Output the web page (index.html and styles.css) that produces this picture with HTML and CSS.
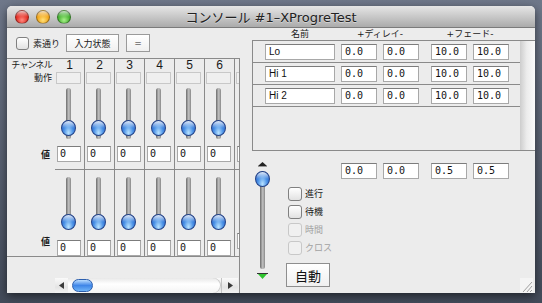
FILE: index.html
```html
<!DOCTYPE html>
<html lang="ja">
<head>
  <meta charset="UTF-8">
  <title>コンソール #1–XProgreTest</title>
  <link rel="stylesheet" href="styles.css">
</head>
<body>
  <div class="window">
    <div class="titlebar">
      <div class="lights">
        <span class="light red"></span>
        <span class="light yellow"></span>
        <span class="light green"></span>
      </div>
      <div class="title">コンソール #1–XProgreTest</div>
      <div class="spacer"></div>
    </div>

    <div class="content">
      <div class="left">
        <div class="toolbar">
          <span class="box"></span>
          <span class="toolbar-label">素通り</span>
          <button class="btn wide">入力状態</button>
          <button class="btn">=</button>
        </div>

        <div class="lower-left">
          <div class="mixer">
            <div class="labels">
              <div class="lbl-ch">チャンネル</div>
              <div class="lbl-act">動作</div>
              <div class="lbl-gap"></div>
              <div class="lbl-val">値</div>
              <div class="lbl-gap2"></div>
              <div class="lbl-val low">値</div>
            </div>

            <div class="strip">
              <div class="ch">1</div>
              <div class="act"></div>
              <div class="fader"><div class="rail"></div><div class="knob"></div></div>
              <div class="tf val">0</div>
              <div class="half">
                <div class="fader low"><div class="rail"></div><div class="knob"></div></div>
                <div class="tf val low">0</div>
              </div>
            </div>
            <div class="strip">
              <div class="ch">2</div>
              <div class="act"></div>
              <div class="fader"><div class="rail"></div><div class="knob"></div></div>
              <div class="tf val">0</div>
              <div class="half">
                <div class="fader low"><div class="rail"></div><div class="knob"></div></div>
                <div class="tf val low">0</div>
              </div>
            </div>
            <div class="strip">
              <div class="ch">3</div>
              <div class="act"></div>
              <div class="fader"><div class="rail"></div><div class="knob"></div></div>
              <div class="tf val">0</div>
              <div class="half">
                <div class="fader low"><div class="rail"></div><div class="knob"></div></div>
                <div class="tf val low">0</div>
              </div>
            </div>
            <div class="strip">
              <div class="ch">4</div>
              <div class="act"></div>
              <div class="fader"><div class="rail"></div><div class="knob"></div></div>
              <div class="tf val">0</div>
              <div class="half">
                <div class="fader low"><div class="rail"></div><div class="knob"></div></div>
                <div class="tf val low">0</div>
              </div>
            </div>
            <div class="strip">
              <div class="ch">5</div>
              <div class="act"></div>
              <div class="fader"><div class="rail"></div><div class="knob"></div></div>
              <div class="tf val">0</div>
              <div class="half">
                <div class="fader low"><div class="rail"></div><div class="knob"></div></div>
                <div class="tf val low">0</div>
              </div>
            </div>
            <div class="strip">
              <div class="ch">6</div>
              <div class="act"></div>
              <div class="fader"><div class="rail"></div><div class="knob"></div></div>
              <div class="tf val">0</div>
              <div class="half">
                <div class="fader low"><div class="rail"></div><div class="knob"></div></div>
                <div class="tf val low">0</div>
              </div>
            </div>
            <!-- next channel, scrolled out of view -->
            <div class="strip">
              <div class="ch"></div>
              <div class="act"></div>
              <div class="fader"></div>
              <div class="tf val"></div>
              <div class="half">
                <div class="fader low"></div>
                <div class="tf val low"></div>
              </div>
            </div>
          </div>

          <div class="hbar-wrap">
            <div class="hbar">
              <span class="hbar-btn">
                <svg width="5" height="7" viewBox="0 0 5 7"><polygon points="5,0 5,7 0,3.5" fill="#3a3a3a"/></svg>
              </span>
              <span class="hbar-track"><span class="hbar-thumb"></span></span>
              <span class="hbar-btn end">
                <svg width="5" height="7" viewBox="0 0 5 7"><polygon points="0,0 0,7 5,3.5" fill="#3a3a3a"/></svg>
              </span>
            </div>
          </div>
        </div>
      </div>

      <div class="right">
        <div class="heads">
          <span class="h-name">名前</span>
          <span class="h-pair">+ディレイ-</span>
          <span class="h-pair fade">+フェード-</span>
        </div>

        <div class="table">
          <div class="rows">
            <div class="row">
              <div class="tf name">Lo</div>
              <div class="tf num">0.0</div>
              <div class="tf num">0.0</div>
              <div class="tf num fade">10.0</div>
              <div class="tf num">10.0</div>
            </div>
            <div class="row">
              <div class="tf name">Hi 1</div>
              <div class="tf num">0.0</div>
              <div class="tf num">0.0</div>
              <div class="tf num fade">10.0</div>
              <div class="tf num">10.0</div>
            </div>
            <div class="row">
              <div class="tf name">Hi 2</div>
              <div class="tf num">0.0</div>
              <div class="tf num">0.0</div>
              <div class="tf num fade">10.0</div>
              <div class="tf num">10.0</div>
            </div>
          </div>
          <div class="vscroll"></div>
        </div>

        <div class="lower">
          <div class="vslider">
            <svg width="9" height="5" viewBox="0 0 9 5"><polygon points="0,4 9,4 4.5,0" fill="#222"/><rect x="0" y="4" width="9" height="1" fill="#999"/></svg>
            <div class="vtrack"><div class="knob"></div></div>
            <svg class="down" width="11" height="6" viewBox="0 0 11 6"><rect x="0" y="0" width="11" height="1" fill="#333"/><polygon points="1,1 10,1 5.5,6" fill="#2ec42e"/></svg>
          </div>

          <div class="controls">
            <div class="vals">
              <div class="tf num">0.0</div>
              <div class="tf num">0.0</div>
              <div class="tf num fade">0.5</div>
              <div class="tf num">0.5</div>
            </div>
            <div class="checks">
              <div class="chk"><span class="box"></span><span>進行</span></div>
              <div class="chk"><span class="box"></span><span>待機</span></div>
              <div class="chk off"><span class="box"></span><span>時間</span></div>
              <div class="chk off"><span class="box"></span><span>クロス</span></div>
            </div>
            <button class="auto">自動</button>
          </div>
        </div>
      </div>
    </div>

    <svg class="grip" width="13" height="15" viewBox="0 0 13 15">
      <rect width="13" height="15" fill="#f4f4f4"/>
      <line x1="12" y1="4" x2="3" y2="14" stroke="#a0a0a0"/>
      <line x1="12" y1="8" x2="7" y2="14" stroke="#a0a0a0"/>
      <line x1="12" y1="12" x2="10" y2="14" stroke="#a0a0a0"/>
    </svg>
  </div>
</body>
</html>
```

FILE: styles.css
```css
body {
  margin: 0;
  height: 303px;
  padding: 6px 0 0 7px;
  box-sizing: border-box;
  background: linear-gradient(#6f788a, #434b5a);
  font-family: "DejaVu Sans", "Noto Sans CJK JP", sans-serif;
  color: #1a1a1a;
  overflow: hidden;
}
.window {
  position: relative;
  width: 528px;
  height: 287px;
  background: #ececec;
  border-radius: 5px 5px 0 0;
  box-shadow: 0 3px 10px rgba(0,0,0,0.55);
  display: flex;
  flex-direction: column;
}

/* title bar */
.titlebar {
  height: 21px;
  border-bottom: 1px solid #7b7b7b;
  border-radius: 5px 5px 0 0;
  background: linear-gradient(#e6e6e6, #ababab);
  display: flex;
  align-items: center;
}
.lights {
  width: 64px;
  padding-left: 8px;
  box-sizing: border-box;
  display: flex;
  gap: 7px;
}
.spacer {
  width: 64px;
}
.light {
  width: 14px;
  height: 14px;
  border-radius: 50%;
  box-sizing: border-box;
  border: 1px solid rgba(0,0,0,0.35);
}
.light.red {
  background: linear-gradient(rgba(255,255,255,0.75), rgba(255,255,255,0) 50%), radial-gradient(circle at 50% 75%, #ff8a80, #e0241a 60%, #9c120c);
}
.light.yellow {
  background: linear-gradient(rgba(255,255,255,0.75), rgba(255,255,255,0) 50%), radial-gradient(circle at 50% 75%, #ffe07a, #f0a010 60%, #b06a00);
}
.light.green {
  background: linear-gradient(rgba(255,255,255,0.75), rgba(255,255,255,0) 50%), radial-gradient(circle at 50% 75%, #a8f08a, #3eae2a 60%, #1f7012);
}
.title {
  flex: 1;
  text-align: center;
  font-size: 13px;
  color: #222;
  text-shadow: 0 1px 0 rgba(255,255,255,0.4);
}

.content {
  flex: 1;
  display: flex;
}

/* left side */
.left {
  width: 233px;
  display: flex;
  flex-direction: column;
}
.toolbar {
  height: 30px;
  padding-left: 9px;
  display: flex;
  align-items: center;
  font-size: 9px;
}
.toolbar-label {
  margin-left: 4px;
}
.box {
  width: 13px;
  height: 13px;
  box-sizing: border-box;
  border: 1px solid #808080;
  border-radius: 3px;
  background: linear-gradient(#ffffff, #e2e2e2);
}
.btn {
  height: 18px;
  width: 24px;
  margin-left: 7px;
  padding: 0;
  border: 1px solid #9a9a9a;
  background: linear-gradient(#ffffff, #f0f0f0);
  font-family: "DejaVu Sans", "Noto Sans CJK JP", sans-serif;
  font-size: 9px;
  color: #1a1a1a;
}
.btn.wide {
  width: 53px;
  margin-left: 6px;
}
.lower-left {
  flex: 1;
  border-right: 1px solid #8a8a8a;
  display: flex;
  flex-direction: column;
}
.mixer {
  height: 197px;
  border-top: 1px solid #8a8a8a;
  border-bottom: 1px solid #8a8a8a;
  display: flex;
  overflow: hidden;
}
.labels {
  width: 48px;
  flex-shrink: 0;
  padding-right: 3px;
  box-sizing: border-box;
  text-align: right;
  font-size: 9px;
}
.lbl-ch {
  height: 12px;
  line-height: 12px;
  letter-spacing: -0.8px;
}
.lbl-act {
  height: 13px;
  line-height: 13px;
  margin-top: 1px;
}
.lbl-gap {
  height: 60px;
}
.lbl-val {
  height: 16px;
  line-height: 16px;
  margin-top: 2px;
  padding-right: 2px;
  font-weight: bold;
}
.lbl-gap2 {
  height: 68px;
}
.lbl-val.low {
  margin-top: 3px;
}
.strip {
  width: 29px;
  flex-shrink: 0;
  border-right: 1px solid #8a8a8a;
  display: flex;
  flex-direction: column;
}
.ch {
  height: 12px;
  line-height: 12px;
  text-align: center;
  font-family: "Liberation Sans", sans-serif;
  font-size: 12px;
}
.act {
  width: 25px;
  height: 12px;
  margin: 1px 0 0 1px;
  box-sizing: border-box;
  border: 1px solid #c8c8c8;
  background: #efefef;
}
.fader {
  position: relative;
  height: 60px;
}
.rail {
  width: 5px;
  height: 51px;
  margin: 4px 0 0 11px;
  border-radius: 3px;
  background: linear-gradient(90deg, #6c6c6c, #c2c2c2 55%, #888);
}
.fader.low .rail {
  margin-top: 7px;
}
.knob {
  position: absolute;
  left: 6px;
  top: 36px;
  width: 15px;
  height: 16px;
  box-sizing: border-box;
  border-radius: 50%;
  border: 1px solid #1f3f86;
  background: linear-gradient(rgba(255,255,255,0.85), rgba(255,255,255,0) 50%), radial-gradient(ellipse at 50% 85%, #b8e2ff, #4c92e6 50%, #1c56c0);
}
.fader.low .knob {
  top: 37px;
}
.tf {
  height: 16px;
  box-sizing: border-box;
  border: 1px solid #a8a8a8;
  border-top-color: #7c7c7c;
  background: #fff;
  font-family: "DejaVu Sans Mono", monospace;
  font-size: 10px;
  line-height: 14px;
  padding-left: 3px;
  color: #111;
}
.val {
  width: 24px;
  margin: 2px 0 0 2px;
  padding-left: 2px;
}
.val.low {
  margin-top: 3px;
}
.half {
  flex: 1;
  margin-top: 7px;
  border-top: 1px solid #8a8a8a;
}
.hbar-wrap {
  flex: 1;
  padding: 21px 0 0 48px;
}
.hbar {
  height: 15px;
  width: 183px;
  display: flex;
  background: linear-gradient(#fafafa, #e4e4e4 60%, #f2f2f2);
}
.hbar-btn {
  width: 13px;
  display: flex;
  align-items: center;
  justify-content: center;
}
.hbar-btn.end {
  width: 16px;
  border-left: 1px solid #c4c4c4;
}
.hbar-track {
  flex: 1;
  display: flex;
  align-items: center;
  border-radius: 0 8px 8px 0;
  background: linear-gradient(#e8e8e8, #ffffff 40%, #f4f4f4);
  box-shadow: inset -1px 0 0 #c8c8c8;
}
.hbar-thumb {
  width: 21px;
  height: 13px;
  margin-left: 4px;
  box-sizing: border-box;
  border-radius: 7px;
  border: 1px solid #2c5fae;
  background: linear-gradient(#b9dcff, #3f86e8 50%, #6fb4f8);
}

/* right side */
.right {
  width: 295px;
  display: flex;
  flex-direction: column;
}
.heads {
  height: 12px;
  padding-left: 25px;
  display: flex;
  font-size: 9px;
  line-height: 12px;
}
.h-name {
  width: 70px;
  text-align: center;
}
.h-pair {
  width: 78px;
  margin-left: 6px;
  text-align: center;
}
.h-pair.fade {
  margin-left: 12px;
}
.table {
  height: 109px;
  margin-left: 12px;
  border: 1px solid #8a8a8a;
  border-right: 0;
  display: flex;
}
.rows {
  flex: 1;
}
.row {
  height: 21px;
  padding-left: 12px;
  border-bottom: 1px solid #8a8a8a;
  display: flex;
  align-items: center;
  gap: 6px;
}
.vscroll {
  width: 15px;
  background: linear-gradient(90deg, #cdcdcd, #ececec 45%, #fafafa);
}
.tf.name {
  width: 70px;
  font-family: "Liberation Sans", sans-serif;
  font-size: 10px;
}
.tf.num {
  width: 36px;
}
.tf.fade {
  margin-left: 6px;
}
.lower {
  flex: 1;
  display: flex;
}
.vslider {
  width: 15px;
  margin-left: 15px;
  padding-top: 11px;
  display: flex;
  flex-direction: column;
  align-items: center;
}
.vtrack {
  position: relative;
  width: 5px;
  height: 98px;
  margin-top: 4px;
  border-radius: 3px;
  background: linear-gradient(90deg, #6c6c6c, #c2c2c2 55%, #888);
}
.vtrack .knob {
  left: -5px;
  top: 0;
}
.vslider .down {
  margin-top: 4px;
}
.controls {
  margin-left: 16px;
  padding-top: 12px;
}
.vals {
  margin-left: 55px;
  display: flex;
  gap: 6px;
}
.checks {
  margin-top: 8px;
}
.chk {
  height: 18px;
  padding-left: 2px;
  display: flex;
  gap: 3px;
  font-size: 9px;
  line-height: 14px;
}
.chk .box {
  width: 14px;
  height: 14px;
}
.chk.off {
  color: #a2a2a2;
}
.chk.off .box {
  border-color: #c8c8c8;
  background: #f0f0f0;
}
.auto {
  width: 44px;
  height: 24px;
  margin-top: 4px;
  padding: 0;
  border: 1px solid #8e8e8e;
  background: linear-gradient(#ffffff, #f0f0f0);
  font-family: "DejaVu Sans", "Noto Sans CJK JP", sans-serif;
  font-size: 13px;
  color: #111;
}
.grip {
  position: absolute;
  right: 2px;
  bottom: 0;
}
```
